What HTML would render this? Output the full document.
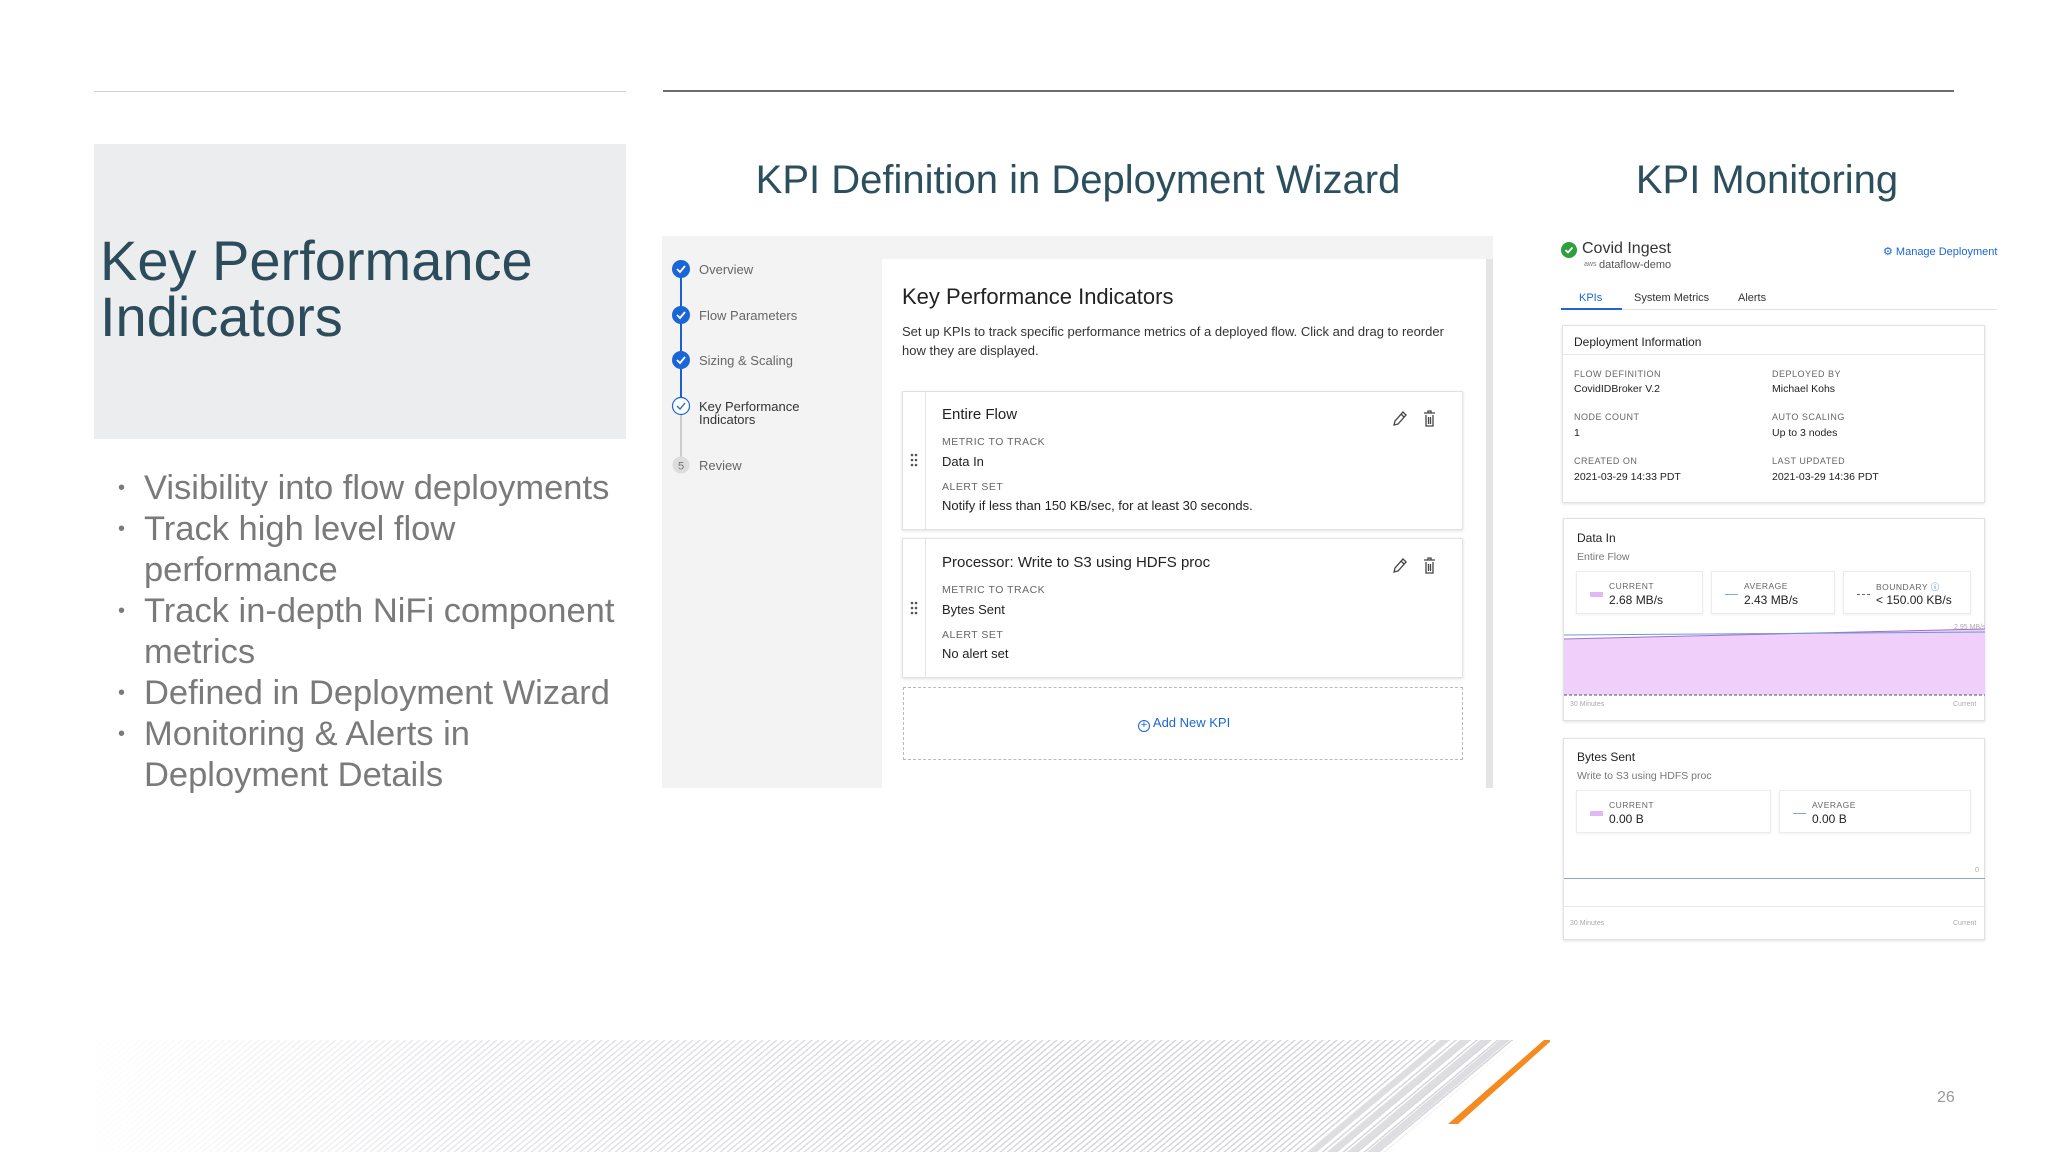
<!DOCTYPE html>
<html><head><meta charset="utf-8"><style>
*{margin:0;padding:0;box-sizing:border-box}
body{width:2048px;height:1152px;background:#fff;position:relative;overflow:hidden;font-family:"Liberation Sans",sans-serif}
.a{position:absolute;white-space:nowrap}
.lbl{font-size:9px;color:#666;letter-spacing:.5px}
.val{font-size:10.5px;color:#222}
.card{position:absolute;background:#fff;border:1px solid #e2e2e2;box-shadow:0 1px 3px rgba(0,0,0,.12)}
.stat{position:absolute;background:#fff;border:1px solid #ececec;box-shadow:0 1px 2px rgba(0,0,0,.06)}
</style></head><body>
<div class="a" style="left:94px;top:91px;width:532px;height:1px;background:#d0d0d0"></div>
<div class="a" style="left:663px;top:90px;width:1291px;height:2px;background:#6e6e6e"></div>
<div class="a" style="left:94px;top:144px;width:532px;height:295px;background:#ecedee"></div>
<div class="a" style="left:100px;top:233px;font-size:56px;line-height:56px;color:#2c4b5b;white-space:normal;width:520px">Key Performance Indicators</div>
<div class="a" style="left:118px;top:468px;font-size:34.5px;line-height:41px;color:#7a7a7a;white-space:normal;width:520px">
<div style="position:relative;padding-left:26px"><span style="position:absolute;left:0;font-size:20px">•</span>Visibility into flow deployments</div>
<div style="position:relative;padding-left:26px"><span style="position:absolute;left:0;font-size:20px">•</span>Track high level flow performance</div>
<div style="position:relative;padding-left:26px"><span style="position:absolute;left:0;font-size:20px">•</span>Track in-depth NiFi component metrics</div>
<div style="position:relative;padding-left:26px"><span style="position:absolute;left:0;font-size:20px">•</span>Defined in Deployment Wizard</div>
<div style="position:relative;padding-left:26px"><span style="position:absolute;left:0;font-size:20px">•</span>Monitoring &amp; Alerts in Deployment Details</div>
</div>
<div class="a" style="left:663px;width:830px;top:158px;text-align:center;font-size:40px;color:#2c4f5e">KPI Definition in Deployment Wizard</div>
<div class="a" style="left:1560px;width:414px;top:158px;text-align:center;font-size:40px;color:#2c4f5e">KPI Monitoring</div>

<!-- wizard -->
<div class="a" style="left:662px;top:236px;width:831px;height:552px;background:#f3f3f4"></div>
<div class="a" style="left:882px;top:259px;width:604px;height:529px;background:#fff"></div>
<div class="a" style="left:1486px;top:259px;width:7px;height:529px;background:#e4e4e4"></div>
<div class="a" style="left:680px;top:270px;width:2px;height:136px;background:#1a5fd1"></div>
<div class="a" style="left:680px;top:406px;width:2px;height:58px;background:#ccc"></div>
<svg class="a" style="left:671px;top:260px" width="20" height="215">
<g fill="#1a66d6"><circle cx="10" cy="9" r="9"/><circle cx="10" cy="55" r="9"/><circle cx="10" cy="100" r="9"/></g>
<g stroke="#fff" stroke-width="1.8" fill="none"><path d="M6 9l3 3 5-6"/><path d="M6 55l3 3 5-6"/><path d="M6 100l3 3 5-6"/></g>
<circle cx="10" cy="146" r="8.5" fill="#fff" stroke="#1a66d6" stroke-width="1.2"/><path d="M6 146l3 3 5-6" stroke="#1a66d6" stroke-width="1.3" fill="none"/>
<circle cx="10" cy="205" r="8.5" fill="#ddd"/><text x="10" y="209.5" font-size="11" fill="#777" text-anchor="middle" font-family="Liberation Sans">5</text>
</svg>
<div class="a" style="left:699px;top:262px;font-size:13px;color:#666">Overview</div>
<div class="a" style="left:699px;top:308px;font-size:13px;color:#666">Flow Parameters</div>
<div class="a" style="left:699px;top:353px;font-size:13px;color:#666">Sizing &amp; Scaling</div>
<div class="a" style="left:699px;top:400px;font-size:13px;line-height:13px;color:#333">Key Performance<br>Indicators</div>
<div class="a" style="left:699px;top:458px;font-size:13px;color:#666">Review</div>
<div class="a" style="left:902px;top:284px;font-size:22px;color:#222">Key Performance Indicators</div>
<div class="a" style="left:902px;top:322px;font-size:13px;line-height:19px;color:#333;white-space:normal;width:560px">Set up KPIs to track specific performance metrics of a deployed flow. Click and drag to reorder how they are displayed.</div>

<div class="card" style="left:902px;top:391px;width:561px;height:139px"></div>
<div class="card" style="left:902px;top:538px;width:561px;height:140px"></div>
<div class="a" style="left:925px;top:392px;width:1px;height:137px;background:#e4e4e4"></div>
<div class="a" style="left:925px;top:539px;width:1px;height:138px;background:#e4e4e4"></div>
<svg class="a" style="left:910px;top:453px" width="8" height="14"><g fill="#555"><circle cx="2" cy="2" r="1.3"/><circle cx="6" cy="2" r="1.3"/><circle cx="2" cy="7" r="1.3"/><circle cx="6" cy="7" r="1.3"/><circle cx="2" cy="12" r="1.3"/><circle cx="6" cy="12" r="1.3"/></g></svg>
<svg class="a" style="left:910px;top:601px" width="8" height="14"><g fill="#555"><circle cx="2" cy="2" r="1.3"/><circle cx="6" cy="2" r="1.3"/><circle cx="2" cy="7" r="1.3"/><circle cx="6" cy="7" r="1.3"/><circle cx="2" cy="12" r="1.3"/><circle cx="6" cy="12" r="1.3"/></g></svg>
<div class="a" style="left:942px;top:406px;font-size:15px;color:#222">Entire Flow</div>
<div class="a lbl" style="left:942px;top:436px;font-size:10.5px">METRIC TO TRACK</div>
<div class="a" style="left:942px;top:454px;font-size:13px;color:#222">Data In</div>
<div class="a lbl" style="left:942px;top:481px;font-size:10.5px">ALERT SET</div>
<div class="a" style="left:942px;top:498px;font-size:13px;color:#222">Notify if less than 150 KB/sec, for at least 30 seconds.</div>
<div class="a" style="left:942px;top:554px;font-size:15px;color:#222">Processor: Write to S3 using HDFS proc</div>
<div class="a lbl" style="left:942px;top:584px;font-size:10.5px">METRIC TO TRACK</div>
<div class="a" style="left:942px;top:602px;font-size:13px;color:#222">Bytes Sent</div>
<div class="a lbl" style="left:942px;top:629px;font-size:10.5px">ALERT SET</div>
<div class="a" style="left:942px;top:646px;font-size:13px;color:#222">No alert set</div>
<svg class="a" style="left:1391px;top:409px" width="50" height="20"><path d="M3 16l1-4 8-9 3 3-8 9z M10 5l3 3" stroke="#444" stroke-width="1.3" fill="none"/><path d="M33 4h11M37 4V2h3v2M35 6v11h7V6M37.5 8v7M39.5 8v7" stroke="#444" stroke-width="1.3" fill="none"/></svg>
<svg class="a" style="left:1391px;top:556px" width="50" height="20"><path d="M3 16l1-4 8-9 3 3-8 9z M10 5l3 3" stroke="#444" stroke-width="1.3" fill="none"/><path d="M33 4h11M37 4V2h3v2M35 6v11h7V6M37.5 8v7M39.5 8v7" stroke="#444" stroke-width="1.3" fill="none"/></svg>
<div class="a" style="left:903px;top:687px;width:560px;height:73px;border:1px dashed #bbb"></div>
<div class="a" style="left:1138px;top:715px;font-size:13px;color:#1a66d6"><span style="display:inline-block;width:12px;height:12px;border:1.3px solid #1a66d6;border-radius:50%;font-size:11px;line-height:9px;text-align:center;vertical-align:-1px">+</span> Add New KPI</div>

<!-- monitoring -->
<svg class="a" style="left:1561px;top:242px" width="16" height="16"><circle cx="8" cy="8" r="8" fill="#2e9e3e"/><path d="M4.5 8l2.5 2.5 4.5-5" stroke="#fff" stroke-width="1.8" fill="none"/></svg>
<div class="a" style="left:1582px;top:240px;font-size:16px;color:#333">Covid Ingest</div>
<div class="a" style="left:1584px;top:261px;font-size:7px;color:#777">aws</div>
<div class="a" style="left:1599px;top:259px;font-size:11px;color:#555">dataflow-demo</div>
<div class="a" style="left:1883px;top:245px;font-size:11px;color:#1a66d6">⚙ Manage Deployment</div>
<div class="a" style="left:1579px;top:292px;font-size:11px;color:#1a66d6">KPIs</div>
<div class="a" style="left:1634px;top:292px;font-size:11px;color:#333">System Metrics</div>
<div class="a" style="left:1738px;top:292px;font-size:11px;color:#333">Alerts</div>
<div class="a" style="left:1561px;top:309px;width:436px;height:1px;background:#e2e2e2"></div>
<div class="a" style="left:1561px;top:308px;width:61px;height:2px;background:#1a66d6"></div>

<div class="card" style="left:1562px;top:325px;width:423px;height:178px"></div>
<div class="a" style="left:1574px;top:335px;font-size:12px;color:#222">Deployment Information</div>
<div class="a" style="left:1563px;top:354px;width:421px;height:1px;background:#e8e8e8"></div>
<div class="a lbl" style="left:1574px;top:369px">FLOW DEFINITION</div><div class="a val" style="left:1574px;top:383px">CovidIDBroker V.2</div>
<div class="a lbl" style="left:1772px;top:369px">DEPLOYED BY</div><div class="a val" style="left:1772px;top:383px">Michael Kohs</div>
<div class="a lbl" style="left:1574px;top:412px">NODE COUNT</div><div class="a val" style="left:1574px;top:427px">1</div>
<div class="a lbl" style="left:1772px;top:412px">AUTO SCALING</div><div class="a val" style="left:1772px;top:427px">Up to 3 nodes</div>
<div class="a lbl" style="left:1574px;top:456px">CREATED ON</div><div class="a val" style="left:1574px;top:471px">2021-03-29 14:33 PDT</div>
<div class="a lbl" style="left:1772px;top:456px">LAST UPDATED</div><div class="a val" style="left:1772px;top:471px">2021-03-29 14:36 PDT</div>

<div class="card" style="left:1563px;top:518px;width:422px;height:203px"></div>
<div class="a" style="left:1577px;top:531px;font-size:12px;color:#222">Data In</div>
<div class="a" style="left:1577px;top:551px;font-size:10.5px;color:#777">Entire Flow</div>
<div class="stat" style="left:1576px;top:571px;width:127px;height:43px"></div>
<div class="stat" style="left:1711px;top:571px;width:124px;height:43px"></div>
<div class="stat" style="left:1843px;top:571px;width:128px;height:43px"></div>
<div class="a" style="left:1590px;top:592px;width:13px;height:5px;background:#e3b6f4"></div>
<div class="a lbl" style="left:1609px;top:581px;font-size:8.5px">CURRENT</div><div class="a" style="left:1609px;top:593px;font-size:12px;color:#222">2.68 MB/s</div>
<div class="a" style="left:1725px;top:594px;width:13px;height:1px;background:#7aaed6"></div>
<div class="a lbl" style="left:1744px;top:581px;font-size:8.5px">AVERAGE</div><div class="a" style="left:1744px;top:593px;font-size:12px;color:#222">2.43 MB/s</div>
<div class="a" style="left:1857px;top:594px;width:13px;height:1px;border-top:1px dashed #666"></div>
<div class="a lbl" style="left:1876px;top:581px;font-size:8.5px">BOUNDARY <span style="color:#1a66d6">ⓘ</span></div><div class="a" style="left:1876px;top:593px;font-size:12px;color:#222">&lt; 150.00 KB/s</div>
<svg class="a" style="left:1564px;top:622px" width="421" height="80">
<path d="M0 17 L421 7 L421 73 L0 73Z" fill="#f0cffa"/>
<path d="M0 17 L421 7" stroke="#a070d0" stroke-width="1"/>
<path d="M0 13 L421 10" stroke="#6a9ccc" stroke-width="1"/>
<path d="M0 73 H421" stroke="#555" stroke-dasharray="3 2" stroke-width="1"/>
<text x="390" y="7" font-size="7" fill="#aaa" font-family="Liberation Sans">2.95 MB/s</text>
</svg>
<div class="a" style="left:1570px;top:701px;font-size:7px;color:#aaa">30 Minutes</div>
<div class="a" style="left:1953px;top:701px;font-size:7px;color:#aaa">Current</div>

<div class="card" style="left:1563px;top:738px;width:422px;height:202px"></div>
<div class="a" style="left:1577px;top:750px;font-size:12px;color:#222">Bytes Sent</div>
<div class="a" style="left:1577px;top:770px;font-size:10.5px;color:#777">Write to S3 using HDFS proc</div>
<div class="stat" style="left:1576px;top:790px;width:195px;height:43px"></div>
<div class="stat" style="left:1779px;top:790px;width:192px;height:43px"></div>
<div class="a" style="left:1590px;top:811px;width:13px;height:5px;background:#e3b6f4"></div>
<div class="a lbl" style="left:1609px;top:800px;font-size:8.5px">CURRENT</div><div class="a" style="left:1609px;top:812px;font-size:12px;color:#222">0.00 B</div>
<div class="a" style="left:1793px;top:813px;width:13px;height:1px;background:#7aaed6"></div>
<div class="a lbl" style="left:1812px;top:800px;font-size:8.5px">AVERAGE</div><div class="a" style="left:1812px;top:812px;font-size:12px;color:#222">0.00 B</div>
<div class="a" style="left:1564px;top:878px;width:421px;height:1px;background:#8aa8cc"></div>
<div class="a" style="left:1975px;top:867px;font-size:7px;color:#aaa">0</div>
<div class="a" style="left:1564px;top:906px;width:421px;height:1px;background:#e8e8e8"></div>
<div class="a" style="left:1570px;top:920px;font-size:7px;color:#aaa">30 Minutes</div>
<div class="a" style="left:1953px;top:920px;font-size:7px;color:#aaa">Current</div>

<!-- footer hatch -->
<div class="a" style="left:78px;top:1040px;width:1470px;height:112px;clip-path:polygon(0 0,1440px 0,1307px 112px,0 112px);background:repeating-linear-gradient(140deg,#fff 0 3px,#d6d6dc 3px 4.5px)"></div>
<div class="a" style="left:78px;top:1040px;width:1000px;height:112px;background:linear-gradient(90deg,#fff 0%,rgba(255,255,255,.4) 40%,rgba(255,255,255,0))"></div>
<div class="a" style="left:1300px;top:1040px;width:248px;height:112px;clip-path:polygon(140px 0,150px 0,17px 112px,7px 112px);background:#dedee2"></div>
<div class="a" style="left:1300px;top:1040px;width:248px;height:112px;clip-path:polygon(160px 0,170px 0,37px 112px,27px 112px);background:#dedee2"></div>
<div class="a" style="left:1300px;top:1040px;width:248px;height:112px;clip-path:polygon(180px 0,190px 0,57px 112px,47px 112px);background:#dedee2"></div>
<div class="a" style="left:1300px;top:1040px;width:248px;height:112px;clip-path:polygon(200px 0,210px 0,77px 112px,67px 112px);background:#dedee2"></div>
<svg class="a" style="left:1440px;top:1040px" width="110" height="90"><path d="M104 0 L112 0 L18 84 L8 84Z" fill="#f58a1f"/></svg>
<div class="a" style="left:1937px;top:1089px;font-size:16px;color:#999">26</div>
</body></html>
